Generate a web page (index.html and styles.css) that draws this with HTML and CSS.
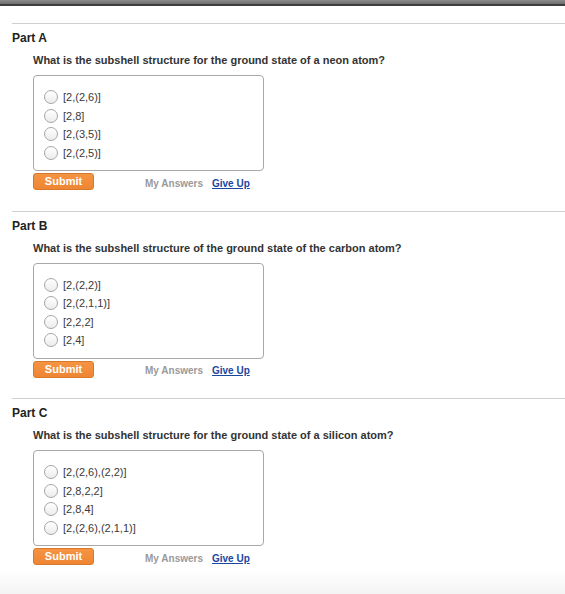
FILE: index.html
```html
<!DOCTYPE html>
<html>
<head>
<meta charset="utf-8">
<link rel="stylesheet" href="styles.css">
</head>
<body>
<div class="topbar"></div>
<div class="content">
  <section class="part">
    <h2 class="part-title">Part A</h2>
    <p class="question">What is the subshell structure for the ground state of a neon atom?</p>
    <div class="choices">
      <label class="choice"><span class="radio"></span><span>[2,(2,6)]</span></label>
      <label class="choice"><span class="radio"></span><span>[2,8]</span></label>
      <label class="choice"><span class="radio"></span><span>[2,(3,5)]</span></label>
      <label class="choice"><span class="radio"></span><span>[2,(2,5)]</span></label>
    </div>
    <div class="actions">
      <button class="submit">Submit</button>
      <span class="my-answers">My Answers</span>
      <a class="give-up" href="#">Give Up</a>
    </div>
  </section>
  <section class="part">
    <h2 class="part-title">Part B</h2>
    <p class="question">What is the subshell structure of the ground state of the carbon atom?</p>
    <div class="choices">
      <label class="choice"><span class="radio"></span><span>[2,(2,2)]</span></label>
      <label class="choice"><span class="radio"></span><span>[2,(2,1,1)]</span></label>
      <label class="choice"><span class="radio"></span><span>[2,2,2]</span></label>
      <label class="choice"><span class="radio"></span><span>[2,4]</span></label>
    </div>
    <div class="actions">
      <button class="submit">Submit</button>
      <span class="my-answers">My Answers</span>
      <a class="give-up" href="#">Give Up</a>
    </div>
  </section>
  <section class="part last">
    <h2 class="part-title">Part C</h2>
    <p class="question">What is the subshell structure for the ground state of a silicon atom?</p>
    <div class="choices">
      <label class="choice"><span class="radio"></span><span>[2,(2,6),(2,2)]</span></label>
      <label class="choice"><span class="radio"></span><span>[2,8,2,2]</span></label>
      <label class="choice"><span class="radio"></span><span>[2,8,4]</span></label>
      <label class="choice"><span class="radio"></span><span>[2,(2,6),(2,1,1)]</span></label>
    </div>
    <div class="actions">
      <button class="submit">Submit</button>
      <span class="my-answers">My Answers</span>
      <a class="give-up" href="#">Give Up</a>
    </div>
  </section>
</div>
<div class="footer"></div>
</body>
</html>
```
FILE: styles.css
```css
html, body {
  margin: 0;
  padding: 0;
  background: #fff;
  font-family: "Liberation Sans", Arial, sans-serif;
  color: #333;
}
.topbar {
  height: 4px;
  background: linear-gradient(#8a8a8a, #6e6e6e);
  border-bottom: 2px solid #3e3e3e;
}
.content {
  padding-top: 17px;
  padding-left: 12px;
}
.part {
  border-top: 1px solid #cfcfcf;
  padding-top: 7px;
  padding-bottom: 20.5px;
}
.part.last {
  padding-bottom: 4px;
}
.part-title {
  margin: 0;
  font-size: 12px;
  line-height: 14px;
  font-weight: bold;
  color: #222;
}
.question {
  margin: 8px 0 0 21px;
  font-size: 11px;
  line-height: 14px;
  font-weight: bold;
  color: #333;
}
.choices {
  margin: 8px 0 0 21px;
  width: 229px;
  border: 1px solid #a8a8a8;
  border-radius: 4px;
  padding: 12px 0 8px 0;
  display: flex;
  flex-direction: column;
}
.choice {
  display: flex;
  align-items: center;
  height: 18.5px;
  padding-left: 10px;
  font-size: 11px;
  color: #3a3a3a;
}
.radio {
  width: 12px;
  height: 12px;
  border: 1px solid #a6a6a6;
  border-radius: 50%;
  background: linear-gradient(#ffffff, #ececec);
  margin-right: 5px;
  flex: none;
}
.actions {
  margin: 2px 0 0 21px;
  display: flex;
  align-items: center;
  height: 17px;
}
.submit {
  width: 61px;
  height: 17px;
  padding: 0;
  border: 1px solid #d8782a;
  border-radius: 3px;
  background: linear-gradient(#f59443, #ee8634);
  color: #fff;
  font-family: "Liberation Sans", Arial, sans-serif;
  font-size: 11px;
  font-weight: bold;
  line-height: 15px;
}
.my-answers {
  margin: 3px 0 0 51px;
  font-size: 10px;
  font-weight: bold;
  color: #9a9a9a;
}
.give-up {
  margin: 3px 0 0 9px;
  font-size: 10px;
  font-weight: bold;
  color: #1a47a0;
  text-decoration: underline;
}
.footer {
  height: 30px;
  background: linear-gradient(#ffffff, #f2f2f2);
}
```
